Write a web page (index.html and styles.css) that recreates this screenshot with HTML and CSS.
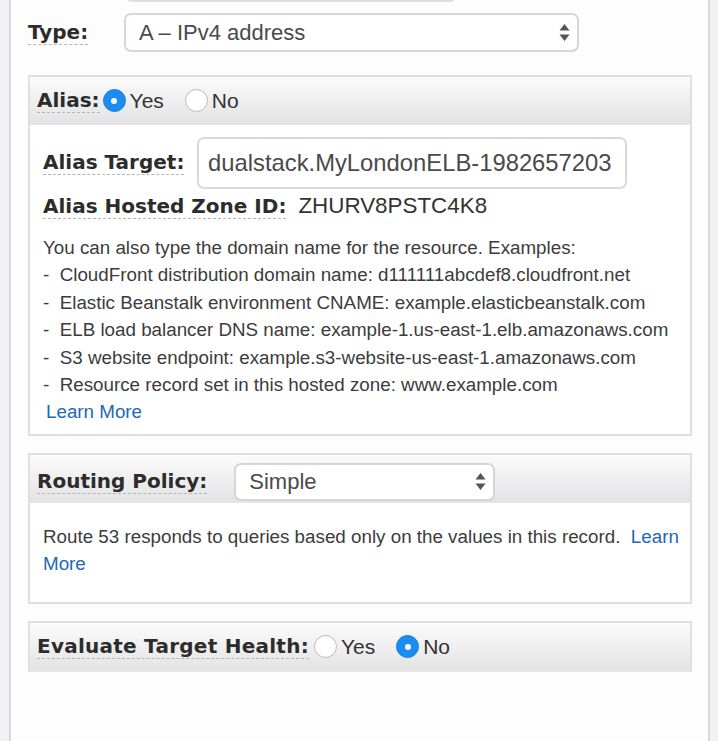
FILE: index.html
```html
<!DOCTYPE html>
<html>
<head>
<meta charset="utf-8">
<link rel="stylesheet" href="styles.css">
</head>
<body>
<div class="page">
  <div class="prev-field"></div>

  <div class="type-row">
    <span class="label-cell"><span class="label">Type:</span></span>
    <div class="select select-type">
      <span class="select-value">A – IPv4 address</span>
      <svg class="arrows" width="11" height="19" viewBox="0 0 11 19"><path d="M5.5 1 L10.5 7.5 H0.5 Z M5.5 18 L10.5 11.5 H0.5 Z" fill="#555"/></svg>
    </div>
  </div>

  <div class="box alias-box">
    <div class="box-head">
      <span class="label">Alias:</span>
      <span class="radio checked"></span><span class="opt">Yes</span>
      <span class="radio gap"></span><span class="opt">No</span>
    </div>
    <div class="box-body">
      <div class="target-row">
        <span class="target-label"><span class="label">Alias Target:</span></span>
        <div class="text-input">dualstack.MyLondonELB-1982657203</div>
      </div>
      <div class="zone-row"><span class="label">Alias Hosted Zone ID:</span> <span class="zone-value">ZHURV8PSTC4K8</span></div>
      <div class="help">
        <div>You can also type the domain name for the resource. Examples:</div>
        <div>-&nbsp; CloudFront distribution domain name: d111111abcdef8.cloudfront.net</div>
        <div>-&nbsp; Elastic Beanstalk environment CNAME: example.elasticbeanstalk.com</div>
        <div>-&nbsp; ELB load balancer DNS name: example-1.us-east-1.elb.amazonaws.com</div>
        <div>-&nbsp; S3 website endpoint: example.s3-website-us-east-1.amazonaws.com</div>
        <div>-&nbsp; Resource record set in this hosted zone: www.example.com</div>
        <div class="learn"><a class="link" href="#">Learn More</a></div>
      </div>
    </div>
  </div>

  <div class="box routing-box">
    <div class="box-head">
      <span class="label">Routing Policy:</span>
      <div class="select select-routing">
        <span class="select-value">Simple</span>
        <svg class="arrows" width="11" height="19" viewBox="0 0 11 19"><path d="M5.5 1 L10.5 7.5 H0.5 Z M5.5 18 L10.5 11.5 H0.5 Z" fill="#555"/></svg>
      </div>
    </div>
    <div class="box-body routing-body">
      <p class="routing-text">Route 53 responds to queries based only on the values in this record.&nbsp; <a class="link" href="#">Learn</a></p>
      <p class="routing-text"><a class="link" href="#">More</a></p>
    </div>
  </div>

  <div class="box eval-box">
    <div class="box-head">
      <span class="label">Evaluate Target Health:</span>
      <span class="radio first"></span><span class="opt">Yes</span>
      <span class="radio checked gap"></span><span class="opt">No</span>
    </div>
  </div>
</div>
</body>
</html>
```
FILE: styles.css
```css
html, body {
  margin: 0;
  padding: 0;
  height: 100%;
  overflow: hidden;
}
body {
  background: #f1f1f3;
  font-family: "Liberation Sans", Arial, sans-serif;
  color: #3a3a3a;
}
.page {
  display: flow-root;
  margin-left: 9px;
  width: 664px;
  min-height: 760px;
  border-left: 2px solid #d9d9db;
  border-right: 2px solid #d9d9db;
  background: #fdfdfd;
  padding: 0 16px 0 17px;
}
.prev-field {
  margin-left: 97px;
  margin-top: -38px;
  width: 328px;
  height: 36px;
  border: 2px solid #dedede;
  border-radius: 7px;
  background: #fff;
}
.label {
  font-family: "DejaVu Sans", Verdana, sans-serif;
  font-weight: bold;
  font-size: 20px;
  color: #2c2c2c;
  line-height: 22px;
  border-bottom: 1px dashed #b5b5b5;
  display: inline-block;
  padding-bottom: 1px;
}
.type-row {
  display: flex;
  align-items: center;
  margin-top: 11px;
}
.label-cell {
  width: 96px;
  flex: none;
}
.select {
  display: flex;
  align-items: center;
  justify-content: space-between;
  box-sizing: border-box;
  border: 2px solid #d6d6d6;
  border-radius: 7px;
  background: #fff;
  font-size: 22px;
  color: #4a4a4a;
  padding: 0 7px 0 13px;
}
.select-type {
  width: 455px;
  height: 39px;
}
.select-routing {
  width: 261px;
  height: 38px;
  margin-left: 27px;
  align-self: flex-end;
  margin-bottom: 1px;
}
.box {
  border: 2px solid #dfdfe1;
  background: #fff;
}
.alias-box {
  margin-top: 23px;
}
.box-head {
  display: flex;
  align-items: center;
  height: 47px;
  padding-left: 7px;
  background: linear-gradient(#fbfbfb, #e3e3e5);
  border-bottom: 1px solid #e6e6e6;
}
.routing-box .box-head .label {
  align-self: flex-end;
  margin-bottom: 8px;
}
.radio {
  width: 23px;
  height: 23px;
  box-sizing: border-box;
  border-radius: 50%;
  border: 1px solid #b9b9b9;
  background: #fff;
  margin-left: 3px;
  margin-right: 4px;
  position: relative;
  flex: none;
}
.radio.first {
  margin-left: 5px;
}
.radio.gap {
  margin-left: 21px;
}
.radio.checked {
  background: #1c8cf2;
  border-color: #1a80df;
}
.radio.checked::after {
  content: "";
  position: absolute;
  left: 7.5px;
  top: 7.5px;
  width: 6px;
  height: 6px;
  border-radius: 50%;
  background: #fff;
}
.opt {
  font-size: 21px;
  color: #333;
}
.box-body {
  padding: 0 10px 0 13px;
}
.target-row {
  display: flex;
  align-items: center;
  margin-top: 12px;
}
.target-label {
  width: 154px;
  flex: none;
}
.text-input {
  box-sizing: border-box;
  width: 430px;
  height: 52px;
  border: 2px solid #d9d9d9;
  border-radius: 7px;
  background: #fff;
  font-size: 23.8px;
  color: #4a4a4a;
  padding-left: 9px;
  line-height: 48px;
  white-space: nowrap;
}
.zone-row {
  margin-top: 4px;
  display: flex;
  align-items: baseline;
}
.zone-value {
  font-size: 22.4px;
  color: #333;
  margin-left: 12px;
}
.help {
  margin-top: 15px;
  font-size: 18.8px;
  line-height: 27.4px;
  color: #3c3c3c;
  padding-bottom: 8px;
}
.learn {
  padding-left: 3px;
}
.link {
  color: #2368b3;
  text-decoration: none;
}
.routing-box {
  margin-top: 17px;
}
.routing-box .box-head {
  height: 47px;
}
.routing-body {
  font-size: 18.8px;
  line-height: 27.4px;
  color: #3c3c3c;
  padding-top: 20px;
  padding-bottom: 24px;
  padding-right: 10px;
}
.routing-text {
  margin: 0;
  white-space: nowrap;
}
.eval-box {
  margin-top: 17px;
  border-bottom: none;
}
.eval-box .box-head {
  height: 48px;
}
.eval-box .label {
  letter-spacing: 0.25px;
}
```
